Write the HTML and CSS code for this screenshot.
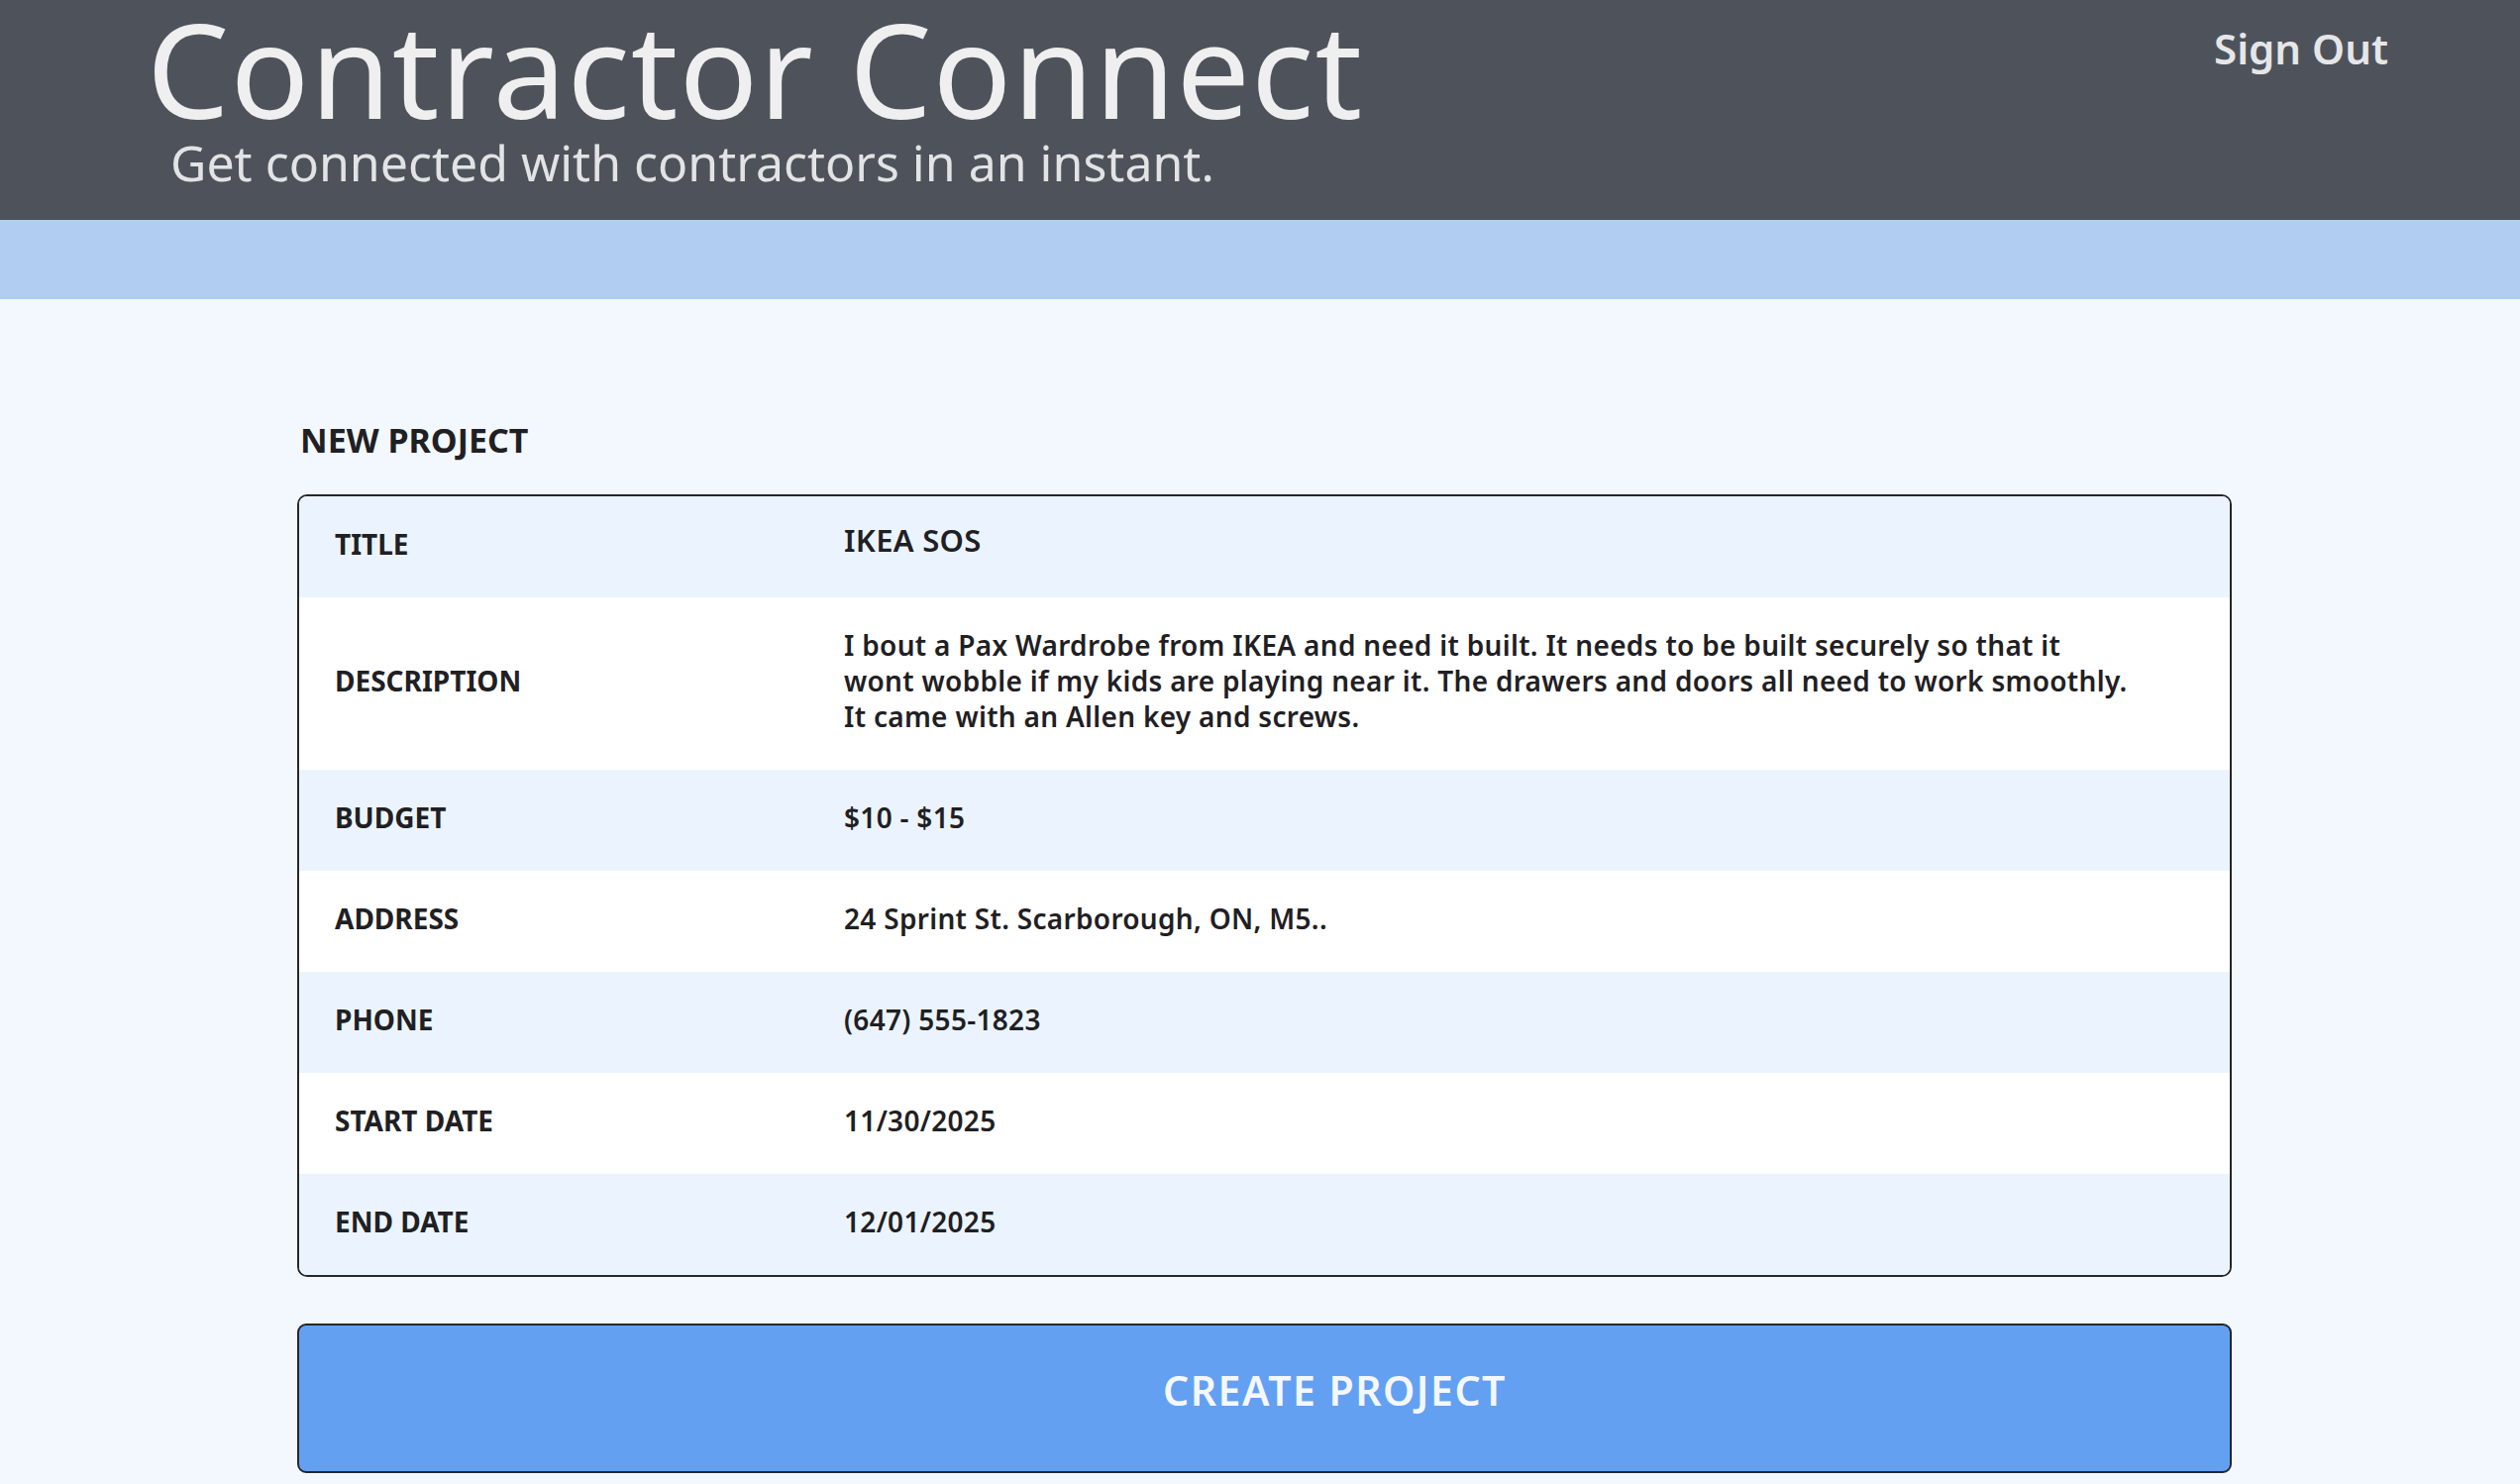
FILE: index.html
```html
<!DOCTYPE html>
<html lang="en">
<head>
    <meta charset="UTF-8">
    <title>Contractor Connect - New Project</title>
    <link rel="stylesheet" href="styles.css">
</head>
<body>
    <header class="cabecera">
        <div class="marca">
            <h1>Contractor Connect</h1>
            <p>Get connected with contractors in an instant.</p>
        </div>
        <a class="salir" href="#">Sign Out</a>
    </header>
    <div class="franja"></div>

    <main class="contenido">
        <h2>NEW PROJECT</h2>
        <div class="tabla-wrap">
            <table class="tabla-proyecto">
                <tr>
                    <th>TITLE</th>
                    <td class="titulo-valor">IKEA SOS</td>
                </tr>
                <tr>
                    <th>DESCRIPTION</th>
                    <td>I bout a Pax Wardrobe from IKEA and need it built. It needs to be built securely so that it<br>
                        wont wobble if my kids are playing near it. The drawers and doors all need to work smoothly.<br>
                        It came with an Allen key and screws.</td>
                </tr>
                <tr>
                    <th>BUDGET</th>
                    <td>$10 - $15</td>
                </tr>
                <tr>
                    <th>ADDRESS</th>
                    <td>24 Sprint St. Scarborough, ON, M5..</td>
                </tr>
                <tr>
                    <th>PHONE</th>
                    <td>(647) 555-1823</td>
                </tr>
                <tr>
                    <th>START DATE</th>
                    <td>11/30/2025</td>
                </tr>
                <tr>
                    <th>END DATE</th>
                    <td>12/01/2025</td>
                </tr>
            </table>
        </div>

        <button class="crear-btn">CREATE PROJECT</button>
    </main>
</body>
</html>
```

FILE: styles.css
```css
body {
    font-family: "Noto Sans", "Open Sans", sans-serif;
    margin: 0;
    background: #f3f8fe;
    color: #1f2023;
}

/* cabecera oscura */
.cabecera {
    background: #4e535b;
    display: flex;
    justify-content: space-between;
    align-items: flex-start;
    padding: 3px 133px 33px 148px;
}

.marca h1 {
    margin: 0;
    font-size: 132px;
    font-weight: 400;
    line-height: 1;
    letter-spacing: 1px;
    color: #efefef;
}

.marca p {
    margin: 4px 0 0 24px;
    font-size: 50px;
    line-height: 1;
    color: #e2e3e5;
}

.salir {
    margin-top: 21px;
    font-size: 42px;
    font-weight: 600;
    line-height: 1.2;
    color: #e6e6e8;
    text-decoration: none;
}

.franja {
    height: 80px;
    background: #b1cdf2;
}

.contenido {
    width: 1953px;
    margin: 0 0 0 300px;
    padding-top: 122px;
}

.contenido h2 {
    margin: 0 0 34px 3px;
    font-size: 34px;
    font-weight: 700;
    line-height: 1.2;
    color: #1f2023;
}

.tabla-wrap {
    border: 2px solid #25272b;
    border-radius: 10px;
    overflow: hidden;
    background: #fff;
}

.tabla-proyecto {
    width: 100%;
    border-collapse: collapse;
}

.tabla-proyecto tr:nth-child(odd) {
    background: #ebf4fe;
}

.tabla-proyecto th,
.tabla-proyecto td {
    padding: 30px 0 36px 0;
    font-size: 28px;
    line-height: 36px;
    text-align: left;
    vertical-align: middle;
}

.tabla-proyecto th {
    width: 514px;
    padding-left: 36px;
    font-weight: 700;
}

.tabla-proyecto td {
    font-weight: 600;
    letter-spacing: 0.3px;
}

.tabla-proyecto .titulo-valor {
    font-size: 31px;
    padding-top: 26px;
    padding-bottom: 40px;
}

.crear-btn {
    display: block;
    width: 100%;
    height: 151px;
    margin-top: 47px;
    padding: 0 0 16px 142px;
    background: #63a0f2;
    border: 2px solid #25272b;
    border-radius: 9px;
    font-family: "Noto Sans", "Open Sans", sans-serif;
    font-size: 41px;
    font-weight: 600;
    letter-spacing: 1.5px;
    color: #f4f8fe;
    cursor: pointer;
}
```
